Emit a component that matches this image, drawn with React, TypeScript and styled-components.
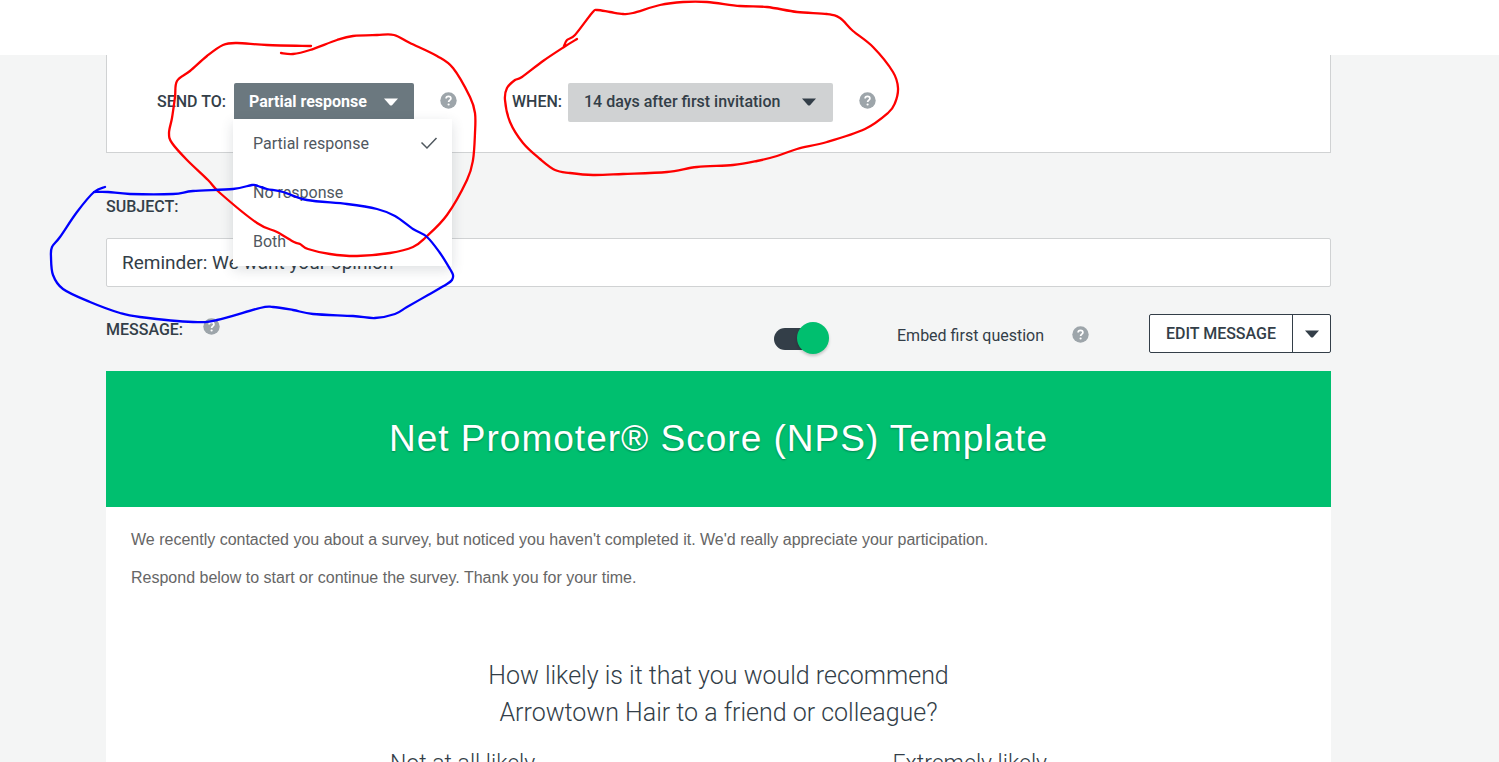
import React, { useState } from "react";
import styled, { createGlobalStyle } from "styled-components";

const ink = "#333e48";
const green = "#00bf6f";
const line = "#d0d2d3";
const uiFont = `Roboto, "Liberation Sans", sans-serif`;

const GlobalStyle = createGlobalStyle`
  *, *::before, *::after { box-sizing: border-box; }
  html, body { margin: 0; background: #f4f5f5; }
  body { color: ${ink}; font-family: ${uiFont}; font-size: 16px; line-height: 24px; }
  button, input, select { font: inherit; color: inherit; margin: 0; }
`;

const Page = styled.div`
  position: relative;
  height: 100vh;
  overflow: hidden;
`;

const TopBar = styled.header`
  height: 55px;
  background: #fff;
`;

const Main = styled.main`
  padding: 0 168px 0 106px;
`;

const Panel = styled.section`
  display: flex;
  align-items: flex-start;
  gap: 55px;
  height: 98px;
  padding: 28px 50px 0;
  background: #fff;
  border: 1px solid ${line};
  border-top: 0;
`;

const Field = styled.div`
  display: flex;
  align-items: flex-start;
`;

const FieldLabel = styled.label<{ $width?: number }>`
  width: ${(p) => (p.$width ? `${p.$width}px` : "auto")};
  line-height: 37px;
  font-weight: 500;
  white-space: nowrap;
`;

const Picker = styled.div`
  position: relative;
`;

const PickerButton = styled.button`
  display: flex;
  align-items: center;
  justify-content: space-between;
  width: 180px;
  height: 37px;
  padding: 0 16px 0 15px;
  border: 0;
  border-radius: 2px 2px 0 0;
  background: #6b787f;
  color: #fff;
  font-weight: 700;
  white-space: nowrap;
`;

const Menu = styled.ul`
  position: absolute;
  top: 36px;
  left: -1px;
  z-index: 2;
  width: 219px;
  margin: 0;
  padding: 0;
  list-style: none;
  background: #fff;
  box-shadow: 0 4px 12px rgba(51, 62, 72, 0.16);
`;

const Option = styled.li`
  display: flex;
  align-items: center;
  justify-content: space-between;
  height: 49px;
  padding: 0 14px 0 20px;
  color: #50585f;
`;

const SelectWrap = styled.div`
  position: relative;
`;

const Select = styled.select`
  appearance: none;
  display: block;
  width: 265px;
  height: 39px;
  padding: 0 44px 2px 16px;
  border: 0;
  border-radius: 2px;
  background: ${line};
  font-weight: 500;
`;

const SelectCaret = styled.span`
  position: absolute;
  top: 0;
  right: 17px;
  display: flex;
  align-items: center;
  height: 37px;
  pointer-events: none;
`;

const Help = styled.button`
  display: flex;
  width: 17px;
  height: 17px;
  padding: 0;
  border: 0;
  background: none;
`;

const PanelHelp = styled.div`
  padding: 9px 0 0 26px;
`;

const Subject = styled.section`
  display: flex;
  flex-direction: column;
  padding-top: 35px;
`;

const SubjectInput = styled.input`
  width: 100%;
  height: 49px;
  margin-top: 13px;
  padding: 0 15px;
  border: 1px solid ${line};
  border-radius: 2px;
  background: #fff;
  font-size: 19px;
`;

const MessageBar = styled.section`
  display: flex;
  align-items: flex-start;
  justify-content: space-between;
  height: 84px;
  padding-top: 27px;
`;

const MessageHeading = styled.h2`
  display: flex;
  gap: 20px;
  margin: 0;
  padding-top: 4px;
  font-size: 16px;
  font-weight: 500;
`;

const MessageTools = styled.div`
  display: flex;
`;

const Switch = styled.input`
  appearance: none;
  position: relative;
  width: 55px;
  height: 22px;
  margin: 14px 68px 0 0;
  background: linear-gradient(${ink}, ${ink}) left / 44px 22px no-repeat;
  border-radius: 11px;

  &::after {
    content: "";
    position: absolute;
    top: -6px;
    right: 0;
    width: 32px;
    height: 32px;
    border-radius: 50%;
    background: ${green};
    box-shadow: 0 2px 3px rgba(0, 0, 0, 0.2);
  }
`;

const EmbedLabel = styled.label`
  width: 175px;
  padding-top: 10px;
`;

const ToolHelp = styled.div`
  padding: 12px 60px 0 0;
`;

const SplitButton = styled.div`
  display: flex;
  height: 39px;
  border: 1px solid ${ink};
  border-radius: 2px;
  background: #fff;
`;

const EditButton = styled.button`
  width: 142px;
  padding: 0;
  border: 0;
  background: none;
  font-weight: 500;
  white-space: nowrap;
`;

const MoreButton = styled.button`
  display: flex;
  align-items: center;
  justify-content: center;
  width: 38px;
  padding: 0;
  border: 0;
  border-left: 1px solid ${ink};
  background: none;
`;

const Banner = styled.div`
  display: flex;
  align-items: center;
  justify-content: center;
  height: 136px;
  background: ${green};
`;

const BannerTitle = styled.h1`
  margin: 0;
  color: #fff;
  font-family: "Liberation Sans", Arial, sans-serif;
  font-size: 37px;
  font-weight: 400;
  line-height: 48px;
  letter-spacing: 1px;
  text-shadow: 0 1px 2px rgba(0, 0, 0, 0.3);
`;

const Email = styled.article`
  padding: 14px 25px;
  background: #fff;
`;

const Copy = styled.p`
  margin: 0;
  color: #666;
  font-family: "Liberation Sans", Arial, sans-serif;
  line-height: 38px;
`;

const Question = styled.h3`
  max-width: 520px;
  margin: 60px auto 0;
  font-size: 25px;
  font-weight: 300;
  line-height: 37px;
  text-align: center;
`;

const Scale = styled.div`
  display: flex;
  justify-content: space-between;
  max-width: 657px;
  margin: 14px auto 0;
  font-size: 23px;
  font-weight: 300;
  line-height: 37px;
`;

const Ink = styled.svg`
  position: absolute;
  top: 0;
  left: 0;
  z-index: 3;
  pointer-events: none;
`;

type Point = [number, number];

const redLeft: Point[] = [
  [311, 46], [267, 45], [237, 43], [223, 45], [207, 56], [190, 71], [177, 81], [175, 97], [172, 118],
  [169, 133], [172, 143], [187, 160], [208, 180], [220, 193], [257, 223], [277, 232], [294, 242],
  [300, 244], [308, 249], [330, 254], [357, 256], [390, 253], [413, 247], [426, 237], [447, 215],
  [467, 180], [473, 160], [475, 133], [475, 113], [470, 97], [453, 68], [437, 56], [410, 43],
  [394, 35], [377, 35], [353, 36], [337, 40], [310, 50], [293, 54], [281, 53],
];

const redRight: Point[] = [
  [577, 39], [564, 47], [543, 61], [522, 77], [515, 80], [507, 88], [505, 100], [510, 122], [523, 143],
  [540, 159], [555, 170], [570, 173], [593, 175], [623, 174], [667, 172], [697, 167], [733, 165],
  [757, 161], [777, 156], [797, 149], [827, 142], [865, 129], [888, 113], [895, 103], [898, 88],
  [893, 72], [873, 47], [853, 31], [840, 18], [827, 14], [797, 12], [767, 7], [740, 6], [707, 2],
  [683, 2], [660, 5], [633, 13], [623, 14], [610, 12], [597, 10], [592, 13], [575, 35], [567, 40],
  [564, 46],
];

const blue: Point[] = [
  [94, 192], [108, 192], [130, 194], [173, 194], [193, 191], [233, 189], [252, 185], [258, 186],
  [267, 189], [283, 192], [307, 200], [347, 204], [377, 209], [395, 216], [413, 229], [427, 237],
  [440, 253], [450, 269], [453, 275], [452, 280], [447, 284], [428, 295], [407, 307], [395, 314],
  [375, 318], [353, 316], [313, 314], [293, 310], [273, 307], [260, 308], [217, 320], [193, 322],
  [140, 317], [120, 313], [90, 302], [63, 289], [53, 275], [51, 257], [52, 247], [60, 237],
  [77, 212], [94, 192], [105, 187],
];

// Catmull-Rom spline through the pen points, written as cubic segments.
function penPath(points: Point[]) {
  let d = `M${points[0][0]} ${points[0][1]}`;
  for (let i = 0; i < points.length - 1; i++) {
    const a = points[Math.max(i - 1, 0)];
    const b = points[i];
    const c = points[i + 1];
    const e = points[Math.min(i + 2, points.length - 1)];
    d += `C${b[0] + (c[0] - a[0]) / 6} ${b[1] + (c[1] - a[1]) / 6} ${c[0] - (e[0] - b[0]) / 6} ${
      c[1] - (e[1] - b[1]) / 6
    } ${c[0]} ${c[1]}`;
  }
  return d;
}

const Caret = () => (
  <svg width="14" height="8" viewBox="0 0 14 8" aria-hidden="true">
    <path d="M0 .5h14L8 7.2q-1 .8-2 0z" fill="currentColor" />
  </svg>
);

const Check = () => (
  <svg width="18" height="14" viewBox="0 0 18 14" fill="none" stroke="currentColor" aria-hidden="true">
    <path d="M1.5 5.500 7 11 16.500 1" strokeWidth="1.5" />
  </svg>
);

const HelpButton = () => (
  <Help type="button" aria-label="Help">
    <svg width="17" height="17" viewBox="0 0 17 17" fill="none" aria-hidden="true">
      <circle cx="8.5" cy="8.5" r="8.2" fill="#9da5aa" />
      <path d="M6.1 6.6c0-1.4 1-2.3 2.4-2.3s2.4.9 2.4 2.1c0 1.700-2.300 1.800-2.300 3.700" stroke="#fff" strokeWidth="1.7" />
      <circle cx="8.600" cy="12.500" r="1.100" fill="#fff" />
    </svg>
  </Help>
);

const recipients = ["Partial response", "No response", "Both"];

export default function App() {
  const [recipient, setRecipient] = useState(recipients[0]);
  return (
    <Page>
      <GlobalStyle />
      <TopBar />
      <Main>
        <Panel>
          <Field>
            <FieldLabel htmlFor="send-to" $width={77}>SEND TO:</FieldLabel>
            <Picker>
              <PickerButton id="send-to" type="button" aria-haspopup="listbox" aria-expanded="true">
                {recipient}
                <Caret />
              </PickerButton>
              <Menu role="listbox" aria-label="Send to">
                {recipients.map((name) => (
                  <Option
                    key={name}
                    role="option"
                    aria-selected={name === recipient}
                    onClick={() => setRecipient(name)}
                  >
                    {name}
                    {name === recipient && <Check />}
                  </Option>
                ))}
              </Menu>
            </Picker>
            <PanelHelp><HelpButton /></PanelHelp>
          </Field>
          <Field>
            <FieldLabel htmlFor="when" $width={56}>WHEN:</FieldLabel>
            <SelectWrap>
              <Select id="when">
                <option>14 days after first invitation</option>
              </Select>
              <SelectCaret><Caret /></SelectCaret>
            </SelectWrap>
            <PanelHelp><HelpButton /></PanelHelp>
          </Field>
        </Panel>

        <Subject>
          <FieldLabel htmlFor="subject">SUBJECT:</FieldLabel>
          <SubjectInput id="subject" type="text" defaultValue="Reminder: We want your opinion" />
        </Subject>

        <MessageBar>
          <MessageHeading>
            MESSAGE:
            <HelpButton />
          </MessageHeading>
          <MessageTools>
            <Switch id="embed" type="checkbox" role="switch" defaultChecked />
            <EmbedLabel htmlFor="embed">Embed first question</EmbedLabel>
            <ToolHelp><HelpButton /></ToolHelp>
            <SplitButton>
              <EditButton type="button">EDIT MESSAGE</EditButton>
              <MoreButton type="button" aria-label="More message options"><Caret /></MoreButton>
            </SplitButton>
          </MessageTools>
        </MessageBar>

        <Banner>
          <BannerTitle>Net Promoter® Score (NPS) Template</BannerTitle>
        </Banner>
        <Email>
          <Copy>
            We recently contacted you about a survey, but noticed you haven't completed it. We'd really
            appreciate your participation.
          </Copy>
          <Copy>Respond below to start or continue the survey. Thank you for your time.</Copy>
          <Question>How likely is it that you would recommend Arrowtown Hair to a friend or colleague?</Question>
          <Scale>
            <span>Not at all likely</span>
            <span>Extremely likely</span>
          </Scale>
        </Email>
      </Main>

      <Ink width="920" height="340" viewBox="0 0 920 340" fill="none" strokeWidth="2.3" strokeLinecap="round" strokeLinejoin="round" aria-hidden="true">
        <path d={penPath(redLeft)} stroke="#fe0000" />
        <path d={penPath(redRight)} stroke="#fe0000" />
        <path d={penPath(blue)} stroke="#0000fe" />
      </Ink>
    </Page>
  );
}
